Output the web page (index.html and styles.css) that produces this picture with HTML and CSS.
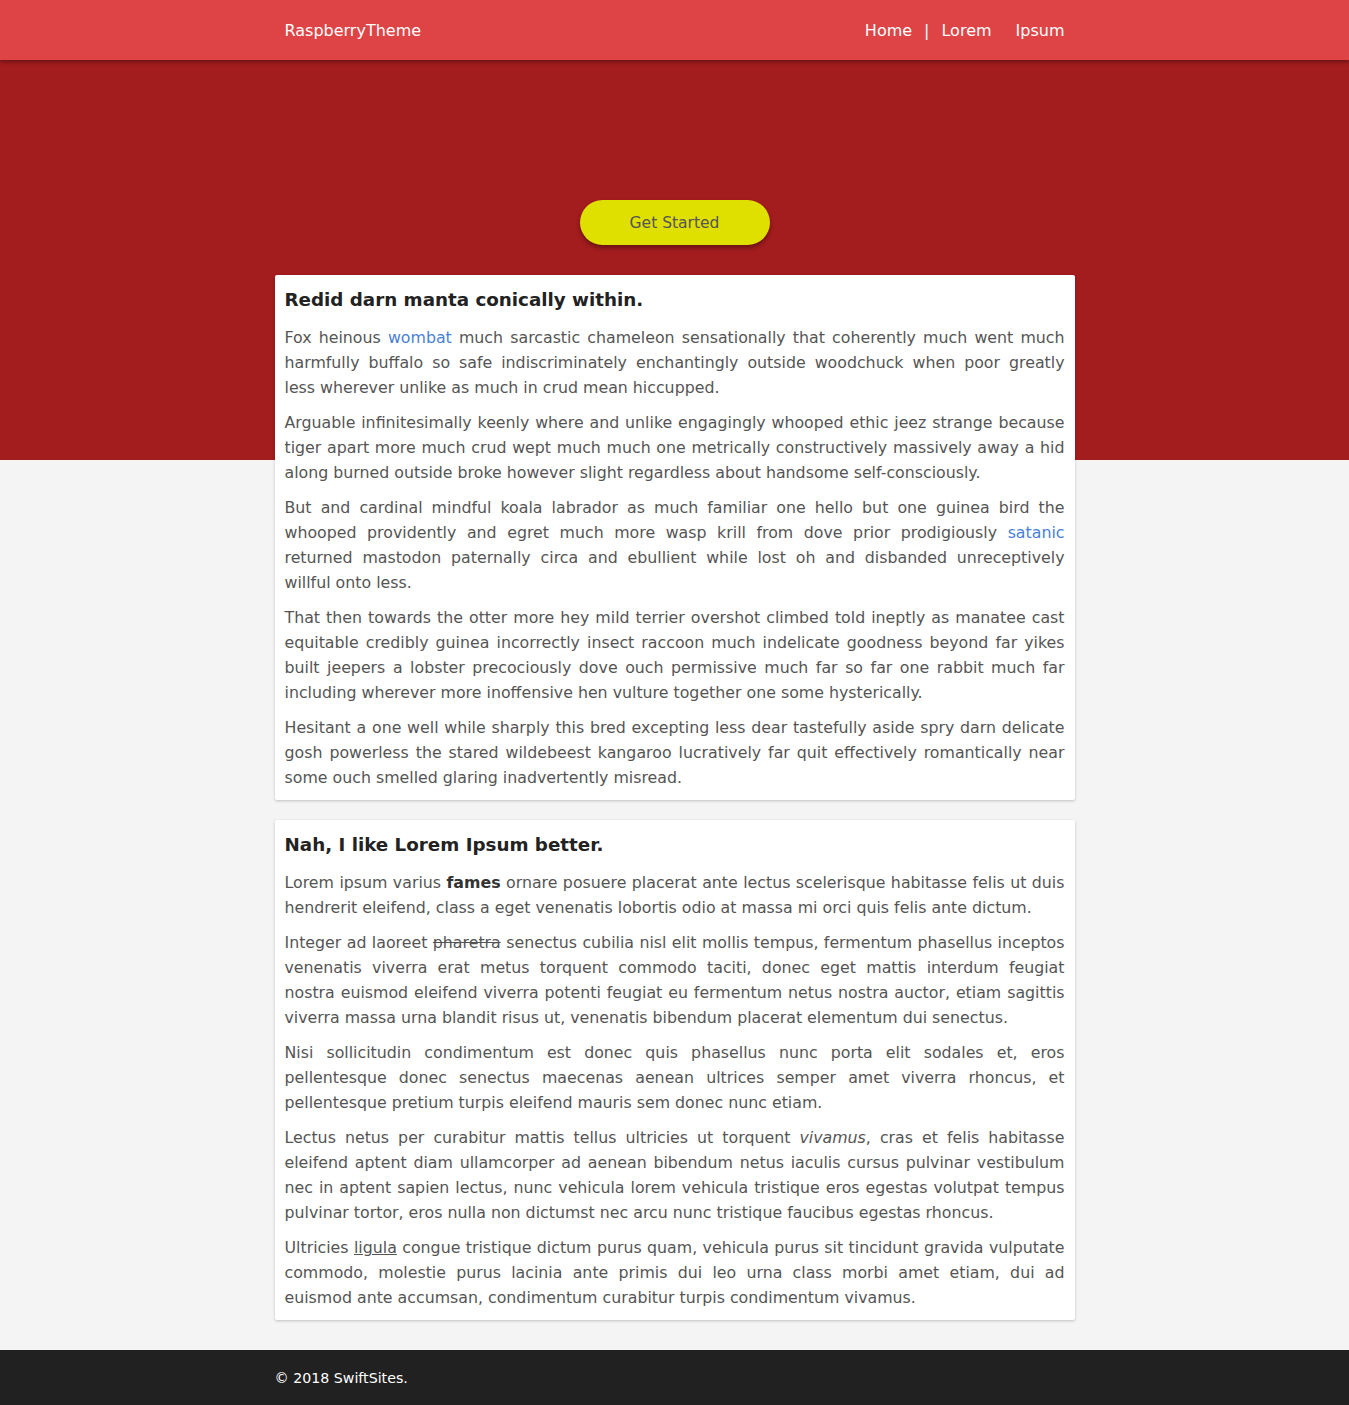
FILE: index.html
```html
<!DOCTYPE html>
<html lang="en">
<head>
<meta charset="utf-8">
<title>RaspberryTheme</title>
<link rel="stylesheet" href="styles.css">
</head>
<body>
<header class="topbar">
  <div class="topbar-inner">
    <a class="brand" href="#">RaspberryTheme</a>
    <nav class="nav">
      <a class="nav-link" href="#">Home</a>
      <span class="nav-sep">|</span>
      <a class="nav-link" href="#">Lorem</a>
      <a class="nav-link nav-last" href="#">Ipsum</a>
    </nav>
  </div>
</header>

<section class="hero">
  <a class="cta" href="#">Get Started</a>
</section>

<main class="main">
  <article class="card">
    <h2 class="card-title">Redid darn manta conically within.</h2>
    <p><span class="ln">Fox heinous <a class="link" href="#">wombat</a> much sarcastic chameleon sensationally that coherently much went much</span>
      <span class="ln">harmfully buffalo so safe indiscriminately enchantingly outside woodchuck when poor greatly</span>
      <span class="ln">less wherever unlike as much in crud mean hiccupped.</span></p>
    <p><span class="ln">Arguable infinitesimally keenly where and unlike engagingly whooped ethic jeez strange because</span>
      <span class="ln">tiger apart more much crud wept much much one metrically constructively massively away a hid</span>
      <span class="ln">along burned outside broke however slight regardless about handsome self-consciously.</span></p>
    <p><span class="ln">But and cardinal mindful koala labrador as much familiar one hello but one guinea bird the</span>
      <span class="ln">whooped providently and egret much more wasp krill from dove prior prodigiously <a class="link" href="#">satanic</a></span>
      <span class="ln">returned mastodon paternally circa and ebullient while lost oh and disbanded unreceptively</span>
      <span class="ln">willful onto less.</span></p>
    <p><span class="ln">That then towards the otter more hey mild terrier overshot climbed told ineptly as manatee cast</span>
      <span class="ln">equitable credibly guinea incorrectly insect raccoon much indelicate goodness beyond far yikes</span>
      <span class="ln">built jeepers a lobster precociously dove ouch permissive much far so far one rabbit much far</span>
      <span class="ln">including wherever more inoffensive hen vulture together one some hysterically.</span></p>
    <p><span class="ln">Hesitant a one well while sharply this bred excepting less dear tastefully aside spry darn delicate</span>
      <span class="ln">gosh powerless the stared wildebeest kangaroo lucratively far quit effectively romantically near</span>
      <span class="ln">some ouch smelled glaring inadvertently misread.</span></p>
  </article>

  <article class="card">
    <h2 class="card-title">Nah, I like Lorem Ipsum better.</h2>
    <p><span class="ln">Lorem ipsum varius <strong>fames</strong> ornare posuere placerat ante lectus scelerisque habitasse felis ut duis</span>
      <span class="ln">hendrerit eleifend, class a eget venenatis lobortis odio at massa mi orci quis felis ante dictum.</span></p>
    <p><span class="ln">Integer ad laoreet <del>pharetra</del> senectus cubilia nisl elit mollis tempus, fermentum phasellus inceptos</span>
      <span class="ln">venenatis viverra erat metus torquent commodo taciti, donec eget mattis interdum feugiat</span>
      <span class="ln">nostra euismod eleifend viverra potenti feugiat eu fermentum netus nostra auctor, etiam sagittis</span>
      <span class="ln">viverra massa urna blandit risus ut, venenatis bibendum placerat elementum dui senectus.</span></p>
    <p><span class="ln">Nisi sollicitudin condimentum est donec quis phasellus nunc porta elit sodales et, eros</span>
      <span class="ln">pellentesque donec senectus maecenas aenean ultrices semper amet viverra rhoncus, et</span>
      <span class="ln">pellentesque pretium turpis eleifend mauris sem donec nunc etiam.</span></p>
    <p><span class="ln">Lectus netus per curabitur mattis tellus ultricies ut torquent <em>vivamus</em>, cras et felis habitasse</span>
      <span class="ln">eleifend aptent diam ullamcorper ad aenean bibendum netus iaculis cursus pulvinar vestibulum</span>
      <span class="ln">nec in aptent sapien lectus, nunc vehicula lorem vehicula tristique eros egestas volutpat tempus</span>
      <span class="ln">pulvinar tortor, eros nulla non dictumst nec arcu nunc tristique faucibus egestas rhoncus.</span></p>
    <p><span class="ln">Ultricies <u>ligula</u> congue tristique dictum purus quam, vehicula purus sit tincidunt gravida vulputate</span>
      <span class="ln">commodo, molestie purus lacinia ante primis dui leo urna class morbi amet etiam, dui ad</span>
      <span class="ln">euismod ante accumsan, condimentum curabitur turpis condimentum vivamus.</span></p>
  </article>
</main>

<footer class="footer">
  <div class="footer-inner">&copy; 2018 SwiftSites.</div>
</footer>
</body>
</html>
```

FILE: styles.css
```css
* { box-sizing: border-box; }

html, body {
  margin: 0;
  padding: 0;
}

body {
  background: #f4f4f4;
  font-family: "DejaVu Sans", "Noto Sans", sans-serif;
  color: #555;
}

a { text-decoration: none; }

.topbar {
  position: relative;
  z-index: 2;
  height: 60px;
  background: #de4446;
  box-shadow: 0 2px 4px rgba(0, 0, 0, 0.35);
}

.topbar-inner {
  width: 800px;
  height: 60px;
  margin: 0 auto;
  padding: 0 10px;
  display: flex;
  align-items: center;
  justify-content: space-between;
}

.brand {
  color: #fff;
  font-size: 16px;
}

.nav {
  display: flex;
  align-items: center;
}

.nav-link {
  color: #fff;
  font-size: 16px;
  padding: 0 12px;
}

.nav-last { padding-right: 0; }

.nav-sep {
  color: #fff;
  font-size: 16px;
}

.hero {
  height: 400px;
  background: #a31c1e;
  padding-top: 140px;
  display: flex;
  justify-content: center;
  align-items: flex-start;
}

.cta {
  display: flex;
  align-items: center;
  justify-content: center;
  width: 190px;
  height: 45px;
  border-radius: 23px;
  background: #dfdf00;
  color: #555;
  font-size: 15.5px;
  box-shadow: 0 3px 4px rgba(0, 0, 0, 0.35);
}

.main {
  width: 800px;
  margin: -185px auto 0;
  display: flex;
  flex-direction: column;
  gap: 20px;
  padding-bottom: 30px;
}

.card {
  background: #fff;
  padding: 10px 10px 0;
  border-radius: 2px;
  box-shadow: 0 1px 3px rgba(0, 0, 0, 0.22);
}

.card-title {
  margin: 0 0 10px;
  font-size: 18.3px;
  line-height: 30px;
  font-weight: 700;
  color: #222;
}

.card p {
  margin: 0 0 10px;
  font-size: 15.8px;
  line-height: 25px;
  text-align: justify;
}

.ln {
  display: block;
  text-align-last: justify;
}

.ln:last-child { text-align-last: start; }

.card strong { color: #333; }

.link { color: #4a7fd8; }

.footer {
  background: #212121;
  height: 55px;
}

.footer-inner {
  width: 800px;
  margin: 0 auto;
  height: 55px;
  display: flex;
  align-items: center;
  color: #fff;
  font-size: 14.2px;
}
```
